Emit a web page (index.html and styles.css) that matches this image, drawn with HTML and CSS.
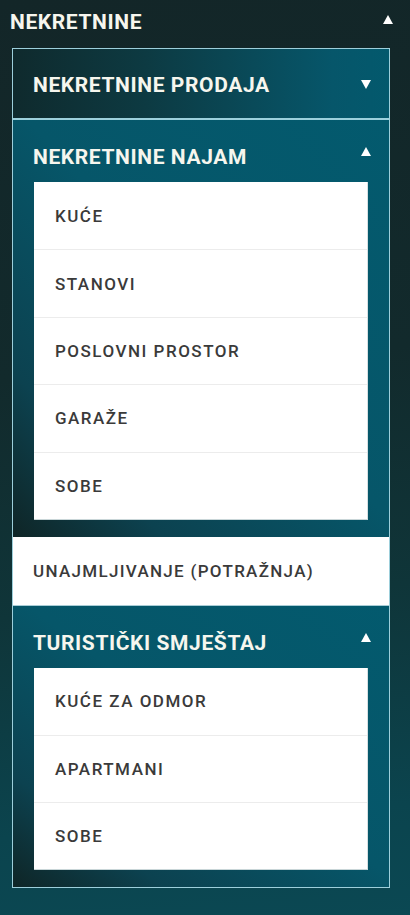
FILE: index.html
```html
<!DOCTYPE html>
<html lang="hr">
<head>
<meta charset="utf-8">
<title>Nekretnine</title>
<link rel="stylesheet" href="styles.css">
</head>
<body>
<nav class="menu">
  <div class="top-row">
    <span class="top-title">NEKRETNINE</span>
    <svg class="tri" width="10" height="9" viewBox="0 0 10 9"><polygon points="5,0 10,9 0,9" fill="#fff"/></svg>
  </div>
  <div class="box">
    <div class="row-head collapsed">
      <span class="head-title">NEKRETNINE PRODAJA</span>
      <svg class="tri" width="10" height="9" viewBox="0 0 10 9"><polygon points="0,0 10,0 5,9" fill="#fff"/></svg>
    </div>
    <div class="section">
      <div class="sec-head">
        <span class="head-title">NEKRETNINE NAJAM</span>
        <svg class="tri" width="10" height="9" viewBox="0 0 10 9"><polygon points="5,0 10,9 0,9" fill="#fff"/></svg>
      </div>
      <ul class="panel five">
        <li>KUĆE</li>
        <li>STANOVI</li>
        <li>POSLOVNI PROSTOR</li>
        <li>GARAŽE</li>
        <li>SOBE</li>
      </ul>
    </div>
    <div class="white-row">UNAJMLJIVANJE (POTRAŽNJA)</div>
    <div class="section last">
      <div class="sec-head">
        <span class="head-title">TURISTIČKI SMJEŠTAJ</span>
        <svg class="tri" width="10" height="9" viewBox="0 0 10 9"><polygon points="5,0 10,9 0,9" fill="#fff"/></svg>
      </div>
      <ul class="panel three">
        <li>KUĆE ZA ODMOR</li>
        <li>APARTMANI</li>
        <li>SOBE</li>
      </ul>
    </div>
  </div>
</nav>
</body>
</html>
```

FILE: styles.css
```css
html, body {
  margin: 0;
  padding: 0;
}
html {
  background: #0b4550;
}
body {
  min-height: 915px;
  background: linear-gradient(175deg, #132628 0%, #122a2c 40%, #0f3539 65%, #0b444e 88%, #0b4853 100%);
  font-family: Roboto, "Liberation Sans", sans-serif;
}
.menu {
  width: 410px;
  padding-bottom: 29px;
}
.top-row {
  height: 48px;
  display: flex;
  align-items: center;
  justify-content: space-between;
  padding: 0 17px 4px 10px;
  box-sizing: border-box;
}
.top-title {
  color: #f6f6ee;
  font-weight: 700;
  font-size: 21px;
  letter-spacing: 0.6px;
}
.tri {
  display: block;
  flex: none;
}
.top-row .tri {
  margin-top: -6px;
}
.box {
  margin-left: 12px;
  width: 378px;
  box-sizing: border-box;
  border: 1px solid #9dcfdb;
}
.head-title {
  color: #f6f6ee;
  font-weight: 700;
  font-size: 21px;
  letter-spacing: 0.6px;
  line-height: 22px;
}
.row-head {
  height: 71px;
  box-sizing: border-box;
  display: flex;
  align-items: center;
  justify-content: space-between;
  padding: 2px 18px 0 20px;
  border-bottom: 2px solid #9cd0dc;
  background: linear-gradient(to right, #0f2a2d 0%, #0d3a42 35%, #06566a 85%, #03596d 100%);
}
.section {
  padding: 0 21px 17px 21px;
  background: linear-gradient(to top right, #0f2526 0%, #0c4250 20%, #065669 52%, #035a6e 100%);
}
.sec-head {
  height: 62px;
  box-sizing: border-box;
  display: flex;
  justify-content: space-between;
  align-items: flex-start;
  padding-top: 26px;
  margin-left: -1px;
  margin-right: -3px;
}
.sec-head .tri {
  margin-top: 1px;
}
.panel {
  list-style: none;
  margin: 0;
  padding: 0;
  background: #fff;
  border-bottom: 1px solid #c9d6d8;
  border-right: 1px solid #d7e0e2;
}
.panel li {
  height: 67.4px;
  box-sizing: border-box;
  display: flex;
  align-items: center;
  padding-left: 21px;
  color: #3a3a3a;
  font-weight: 500;
  font-size: 17px;
  letter-spacing: 1.5px;
}
.panel li + li {
  border-top: 1px solid #ececec;
}
.panel.three li {
  height: 67px;
}
.white-row {
  height: 69px;
  box-sizing: border-box;
  display: flex;
  align-items: center;
  padding-left: 20px;
  background: #fff;
  color: #3a3a3a;
  font-weight: 500;
  font-size: 17px;
  letter-spacing: 1.3px;
  border-bottom: 1px solid #a9cdd6;
}
```
